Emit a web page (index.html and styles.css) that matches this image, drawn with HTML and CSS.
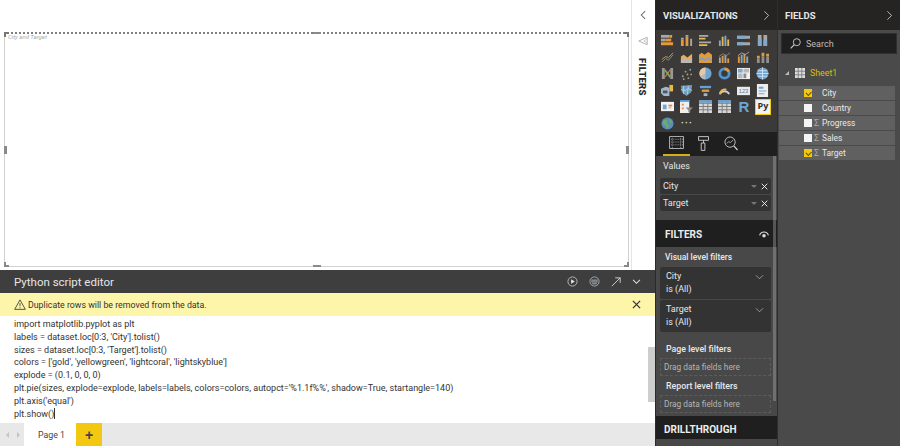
FILE: index.html
```
<!DOCTYPE html>
<html lang="en">
<head>
<meta charset="utf-8">
<title>Python script editor</title>
<link rel="stylesheet" href="styles.css">
</head>
<body>
<svg class="defs" width="0" height="0" aria-hidden="true">
  <defs>
    <symbol id="chev-r" viewBox="0 0 10 14"><path d="M2 1l6 6-6 6" fill="none" stroke="currentColor" stroke-width="1.3"/></symbol>
    <symbol id="chev-d" viewBox="0 0 14 10"><path d="M1 2l6 6 6-6" fill="none" stroke="currentColor" stroke-width="1.2"/></symbol>
    <symbol id="x" viewBox="0 0 10 10"><path d="M1 1l8 8M9 1l-8 8" fill="none" stroke="currentColor" stroke-width="1.4"/></symbol>
    <symbol id="grid" viewBox="0 0 14 14"><rect width="14" height="14" fill="#d6d6d6"/><path d="M0 3.5h14M0 7h14M0 10.500h14M4.500 3v11M9.500 3v11" stroke="#777" stroke-width="1"/><rect width="14" height="3" fill="#6f9fc8"/></symbol>
  </defs>
</svg>
<div class="app">
  <div class="main">
    <div class="report">
      <div class="canvas">
        <div class="visual">
          <span class="visual-title">City and Target</span>
          <i class="corner corner-tl"></i>
          <i class="corner corner-tr"></i>
          <i class="corner corner-br"></i>
          <i class="corner corner-bl"></i>
          <i class="tick tick-top"></i>
          <i class="tick tick-bottom"></i>
          <i class="tick-v tick-left"></i>
          <i class="tick-v tick-right"></i>
        </div>
      </div>
      <div class="filter-strip">
        <svg class="strip-chev" width="6" height="10" viewBox="0 0 7 11"><path d="M6 1L1.500 5.500 6 10" fill="none" stroke="#6a6a6a" stroke-width="1.200"/></svg>
        <svg class="strip-funnel" width="10" height="10" viewBox="0 0 12 12"><path d="M11 1.500v9L1 6z" fill="none" stroke="#a5a5a5"/><path d="M11 3.500L7 6l4 2.500" fill="none" stroke="#c0c0c0"/></svg>
        <span class="strip-label">FILTERS</span>
      </div>
    </div>
    <div class="editor-head">
      <span class="editor-title">Python script editor</span>
      <div class="editor-actions">
        <svg width="11" height="11" viewBox="0 0 12 12"><circle cx="6" cy="6" r="5" fill="none" stroke="#b9c0c6"/><path d="M4.500 3.500v5L8.500 6z" fill="#e8e8e8"/></svg>
        <svg width="11" height="11" viewBox="0 0 12 12"><circle cx="6" cy="6" r="5" fill="none" stroke="#a9b0b6"/><path d="M2.500 4.500h7M2.500 6.500h7M3.500 8.500h5" stroke="#b4bbc1" fill="none"/></svg>
        <svg width="10" height="10" viewBox="0 0 12 12"><path d="M1 11L11 1M5 1h6v6" fill="none" stroke="#d4d4d4" stroke-width="1.100"/></svg>
        <svg width="9" height="6" viewBox="0 0 10 7"><path d="M1 1l4 4 4-4" fill="none" stroke="#e0e0e0" stroke-width="1.200"/></svg>
      </div>
    </div>
    <div class="warning">
      <svg width="12" height="11" viewBox="0 0 13 12"><path d="M6.500 1L12.300 11.300H.7z" fill="none" stroke="#444" stroke-width="1"/><path d="M6.500 4.500v3.500M6.500 9v1" stroke="#444"/></svg>
      <span class="warning-text">Duplicate rows will be removed from the data.</span>
      <svg class="warning-close" width="9" height="9" viewBox="0 0 10 10"><use href="#x"/></svg>
    </div>
    <div class="code-wrap">
      <pre class="code">import matplotlib.pyplot as plt
labels = dataset.loc[0:3, 'City'].tolist()
sizes = dataset.loc[0:3, 'Target'].tolist()
colors = ['gold', 'yellowgreen', 'lightcoral', 'lightskyblue']
explode = (0.1, 0, 0, 0)
plt.pie(sizes, explode=explode, labels=labels, colors=colors, autopct='%1.1f%%', shadow=True, startangle=140)
plt.axis('equal')
plt.show()<span class="caret"></span></pre>
      <div class="code-scroll"><div class="code-thumb"></div></div>
    </div>
    <div class="tabs">
      <div class="tab-nav"><span class="tri tri-l"></span><span class="tri tri-r"></span></div>
      <div class="tab">Page 1</div>
      <div class="tab-add">+</div>
    </div>
  </div>

  <div class="viz">
    <div class="panel-head">
      <span>VISUALIZATIONS</span>
      <svg class="head-chev" width="7" height="11"><use href="#chev-r"/></svg>
    </div>
    <div class="viz-grid">
      <svg viewBox="0 0 14 14"><path d="M0 1h9v3H0z" fill="#a8a8a8"/><path d="M9 1h3v3H9zM0 9h13v3H0z" fill="#e39a3c"/><path d="M0 5h5v3H0z" fill="#a8a8a8"/><path d="M5 5h6v3H5z" fill="#e39a3c"/></svg>
      <svg viewBox="0 0 14 14"><path d="M1 6h3v7H1zM6 3h3v10H6z" fill="#e39a3c"/><path d="M1 4h3v2H1zM6 1h3v2H6zM11 5h2v8h-2z" fill="#a8a8a8"/></svg>
      <svg viewBox="0 0 14 14"><path d="M0 1h10v2H0zM0 8h13v2H0z" fill="#a8a8a8"/><path d="M0 4h7v2H0zM0 11h9v2H0z" fill="#e8b84a"/></svg>
      <svg viewBox="0 0 14 14"><path d="M1 7h2v6H1zM7 2h2v11H7z" fill="#7fa9cc"/><path d="M4 3h2v10H4zM10 6h2v7h-2z" fill="#e8b84a"/></svg>
      <svg viewBox="0 0 14 14"><path d="M0 2h14v3H0zM0 9h14v3H0z" fill="#a8a8a8"/><path d="M0 2h9v3H0zM0 9h7v3H0z" fill="#7fa9cc"/></svg>
      <svg viewBox="0 0 14 14"><path d="M2 1h4v12H2zM8 1h4v12H8z" fill="#a8a8a8"/><path d="M2 5h4v8H2zM8 7h4v6H8z" fill="#7fa9cc"/></svg>

      <svg viewBox="0 0 14 14"><path d="M1 12L5 8l3 2 5-6" fill="none" stroke="#8e8e8e"/><path d="M1 9l4-3 3 1 5-5" fill="none" stroke="#d9963c"/></svg>
      <svg viewBox="0 0 14 14"><path d="M1 13V6l3-2 4 3 5-4v10z" fill="#eaa95f"/><path d="M1 13V9l4-1 4 2 4-2v5z" fill="#b8b8b8"/></svg>
      <svg viewBox="0 0 14 14"><path d="M0 13V4l3-2 3 2 4-3 4 3v9z" fill="#e39a3c"/><path d="M0 9l3-2 4 2 3-2 4 2v2l-4-2-3 2-4-2-3 2z" fill="#6fa5d3"/></svg>
      <svg viewBox="0 0 14 14"><path d="M1 7h2v6H1zM7 4h2v9H7z" fill="#a8a8a8"/><path d="M4 5h2v8H4zM10 8h2v5h-2z" fill="#e39a3c"/><path d="M1 6l4-3 4 2 4-3" fill="none" stroke="#888"/></svg>
      <svg viewBox="0 0 14 14"><path d="M1 6h2v7H1zM7 3h2v10H7z" fill="#e39a3c"/><path d="M4 4h2v9H4zM10 6h2v7h-2z" fill="#7fa9cc"/><path d="M1 5l4-3 4 2 4-3" fill="none" stroke="#aaa"/></svg>
      <svg viewBox="0 0 14 14"><path d="M1 5h3v3H1zM6 2h3v4H6zM11 3h3v3h-3z" fill="#e39a3c"/><path d="M1 8h3v5H1zM6 6h3v7H6zM11 6h3v7h-3z" fill="#8f8f8f"/></svg>

      <svg viewBox="0 0 14 14"><path d="M1 1h3v12H1zM10 1h3v12h-3z" fill="#999"/><path d="M4 3l6 8" stroke="#79a86a" stroke-width="2"/><path d="M4 11l6-8" stroke="#d9873a" stroke-width="1.200"/></svg>
      <svg viewBox="0 0 14 14"><g fill="#7fa9cc"><circle cx="3" cy="10" r="1"/><circle cx="6" cy="5" r="1"/><circle cx="11" cy="3" r="1"/></g><g fill="#e39a3c"><circle cx="8" cy="8" r="1"/><circle cx="4" cy="13" r="1"/></g><g fill="#9a9a9a"><circle cx="12" cy="8" r="1"/><circle cx="9" cy="12" r="1"/></g></svg>
      <svg viewBox="0 0 14 14"><circle cx="7" cy="7" r="6.500" fill="#6fa5d3"/><path d="M7 7V.5A6.500 6.500 0 0 0 1.500 10.500z" fill="#e8c8a8"/><path d="M7 7l-5.500 3.500A6.500 6.500 0 0 0 7 13.500z" fill="#b9b9b9"/></svg>
      <svg viewBox="0 0 14 14"><circle cx="7" cy="7" r="5" fill="none" stroke="#4f94cf" stroke-width="3"/><path d="M7 2a5 5 0 0 1 4.500 3" fill="none" stroke="#e39a3c" stroke-width="3"/></svg>
      <svg viewBox="0 0 14 14"><path d="M0 1h14v12H0z" fill="#f0f0f0"/><path d="M1 2h5v4H1z" fill="#7fa9cc"/><path d="M7 2h6v4H7zM1 7h5v5H1z" fill="#b8b8b8"/><path d="M7 7h3v5H7z" fill="#8a8a8a"/></svg>
      <svg viewBox="0 0 14 14"><circle cx="7" cy="7" r="6.500" fill="#6fa5d3"/><path d="M.5 7h13M2 4h10M2 10h10M7 .5v13" stroke="#e4eef6" stroke-width=".8" fill="none"/></svg>

      <svg viewBox="0 0 14 14"><path d="M0 5l5-2 4 1v9H3L0 10z" fill="#9db9cf"/><path d="M9 1h4v7H9z" fill="#e8b84a"/><path d="M2 7h5v3H2z" fill="#555"/></svg>
      <svg viewBox="0 0 14 14"><path d="M1 2l12-1-1 8-5 4-5-4z" fill="#6e9cc0"/><path d="M1 6l5 1 3-2 4 2M4 2v9M9 2l-1 9" stroke="#cfdbe6" stroke-width=".8" fill="none"/></svg>
      <svg viewBox="0 0 14 14"><path d="M1 2h12v2.500H1z" fill="#5fa2d8"/><path d="M3 6h8v2.500H3z" fill="#e39a3c"/><path d="M5 10h4v3H5z" fill="#9bb9d0"/></svg>
      <svg viewBox="0 0 14 14"><path d="M2 11a5.500 5.500 0 0 1 10 0" fill="none" stroke="#cfcfcf" stroke-width="2"/><path d="M2 11a5.500 5.500 0 0 1 7-5" fill="none" stroke="#e8b84a" stroke-width="2"/></svg>
      <svg viewBox="0 0 14 14"><path d="M0 3h14v9H0z" fill="#e9e9e9"/><text x="7" y="10" font-size="6" text-anchor="middle" font-family="Liberation Sans" fill="#4f7ea8">123</text></svg>
      <svg viewBox="0 0 14 14"><path d="M1 0h12v14H1z" fill="#eeeeee"/><path d="M3 3h5v2H3zM3 7h8v1H3zM3 10h6v1H3z" fill="#6fa5d3"/></svg>

      <svg viewBox="0 0 14 14"><path d="M0 2h14v10H0z" fill="#f3f3f3"/><path d="M2 5h4v5H2z" fill="#6fa5d3"/><path d="M8 5h4v2H8z" fill="#e08a4a"/><path d="M8 8h3v1H8z" fill="#999"/></svg>
      <svg viewBox="0 0 14 14"><path d="M0 0h10v14H0z" fill="#eeeeee"/><path d="M0 0h10v2H0z" fill="#5b9bd5"/><path d="M2 4h2v2H2zM2 8h2v2H2z" fill="#e08a4a"/><path d="M6 8h8l-3 3v3l-2-1v-2z" fill="#8d8d8d"/></svg>
      <svg viewBox="0 0 14 14"><use href="#grid"/></svg>
      <svg viewBox="0 0 14 14"><use href="#grid"/></svg>
      <span class="viz-r">R</span>
      <span class="viz-py">Py</span>

      <svg viewBox="0 0 14 14"><circle cx="7" cy="7" r="6.500" fill="#5a8fb8"/><path d="M3 3l4 1-1 3 3 2-2 4-2-4-3-2z" fill="#6fae6a"/><path d="M9 2l3 3-2 2z" fill="#6fae6a"/></svg>
      <span class="viz-more">···</span>
    </div>
    <div class="viz-tabs">
      <span class="viz-tab viz-tab-on">
        <svg width="15" height="13" viewBox="0 0 16 14"><path d="M.5.5h15v13H.5z" fill="none" stroke="#bdbdbd"/><path d="M0 3.500h16M0 6.500h16M0 9.500h16M3.500 0v14M12.500 0v14" stroke="#9c9c9c" stroke-dasharray="1 1"/></svg>
      </span>
      <span class="viz-tab">
        <svg width="11" height="15" viewBox="0 0 12 16"><path d="M.5.5h11v4H.5zM6 4.500v3H3.500v8h4v-8H6" fill="none" stroke="#d0d0d0"/></svg>
      </span>
      <span class="viz-tab">
        <svg width="14" height="15" viewBox="0 0 15 16"><circle cx="6.500" cy="6.500" r="5.500" fill="none" stroke="#c4c4c4"/><path d="M10.500 10.500l4 4.500" stroke="#d0d0d0" stroke-width="1.400"/><path d="M3 8l2-2 2 1 3-3" fill="none" stroke="#a9a9a9"/></svg>
      </span>
    </div>
    <div class="values">
      <div class="values-label">Values</div>
      <div class="well">
        <div class="pill"><span>City</span><i class="pill-caret"></i><svg width="7" height="7"><use href="#x"/></svg></div>
        <div class="pill"><span>Target</span><i class="pill-caret"></i><svg width="7" height="7"><use href="#x"/></svg></div>
      </div>
    </div>
    <div class="filters-head">
      <span>FILTERS</span>
      <svg width="10" height="7" viewBox="0 0 11 8"><path d="M.5 5a5.200 5.200 0 0 1 10 0" fill="none" stroke="#ddd" stroke-width="1.200"/><circle cx="5.500" cy="5.500" r="2" fill="#ddd"/></svg>
    </div>
    <div class="filters">
      <div class="filter-label filter-label-first">Visual level filters</div>
      <div class="filter-well">
        <div class="filter-card">
          <div class="filter-name"><span>City</span><svg width="9" height="6"><use href="#chev-d"/></svg></div>
          <div>is (All)</div>
        </div>
        <div class="filter-card">
          <div class="filter-name"><span>Target</span><svg width="9" height="6"><use href="#chev-d"/></svg></div>
          <div>is (All)</div>
        </div>
      </div>
      <div class="filter-label filter-label-page">Page level filters</div>
      <div class="drop">Drag data fields here</div>
      <div class="filter-label filter-label-report">Report level filters</div>
      <div class="drop">Drag data fields here</div>
    </div>
    <div class="drill-head">DRILLTHROUGH</div>
    <div class="drill-body"></div>
    <div class="panel-scroll"></div>
  </div>

  <div class="fields">
    <div class="panel-head">
      <span>FIELDS</span>
      <svg class="head-chev" width="7" height="11"><use href="#chev-r"/></svg>
    </div>
    <div class="search">
      <svg width="11" height="11" viewBox="0 0 11 11"><circle cx="6.800" cy="4.200" r="3.500" fill="none" stroke="#bdbdbd"/><path d="M4.300 6.700L.7 10.300" stroke="#c8c8c8" stroke-width="1.200"/></svg>
      <span>Search</span>
    </div>
    <div class="table-row">
      <i class="expand"></i>
      <svg width="10" height="10" viewBox="0 0 14 14"><rect width="14" height="14" fill="#dcdcdc"/><path d="M0 4.500h14M0 9.500h14M4.500 0v14M9.500 0v14" stroke="#777" stroke-width="1.200"/></svg>
      <span class="table-name">Sheet1</span>
    </div>
    <div class="field-list">
      <div class="field"><i class="check check-on"></i><span class="sigma"></span><span>City</span></div>
      <div class="field"><i class="check"></i><span class="sigma"></span><span>Country</span></div>
      <div class="field"><i class="check"></i><span class="sigma">Σ</span><span>Progress</span></div>
      <div class="field"><i class="check"></i><span class="sigma">Σ</span><span>Sales</span></div>
      <div class="field"><i class="check check-on"></i><span class="sigma">Σ</span><span>Target</span></div>
    </div>
  </div>
</div>
</body>
</html>
```
FILE: styles.css
```
* { box-sizing: border-box; }
html, body { margin: 0; height: 100%; }
body { width: 900px; height: 446px; overflow: hidden; background: #fff; font-family: Roboto, "Open Sans", sans-serif; font-size: 9px; color: #ddd; }
.defs { position: absolute; }
.app { display: flex; width: 900px; height: 446px; }

/* main column */
.main { width: 655px; display: flex; flex-direction: column; background: #fff; }
.report { height: 270px; display: flex; }
.canvas { width: 632px; padding: 32px 2px 3px 4px; border-right: 1px solid #e4e4e4; }
.visual { position: relative; height: 100%; border: 1px solid #d2d2d2; border-top: 2px dotted #7f7f7f; }
.visual-title { position: absolute; left: 3px; top: -2px; font-size: 6px; color: #a9a9a9; font-style: italic; line-height: 9px; }
.corner { position: absolute; width: 5px; height: 5px; }
.corner-tl { left: -1px; top: -2px; border-left: 2px solid #777; border-top: 2px solid #777; }
.corner-tr { right: -1px; top: -2px; border-right: 2px solid #777; border-top: 2px solid #777; }
.corner-br { right: -1px; bottom: -1px; border-right: 2px solid #888; border-bottom: 2px solid #888; }
.corner-bl { left: -1px; bottom: -1px; border-left: 2px solid #888; border-bottom: 2px solid #888; }
.tick { position: absolute; left: 50%; width: 8px; height: 2px; margin-left: -4px; background: #8a8a8a; }
.tick-top { top: -2px; }
.tick-bottom { bottom: -1px; }
.tick-v { position: absolute; top: 50%; width: 3px; height: 8px; margin-top: -4px; background: #8a8a8a; }
.tick-left { left: -1px; }
.tick-right { right: -1px; }

.filter-strip { width: 23px; display: flex; flex-direction: column; align-items: center; padding-top: 10px; gap: 10px; }
.strip-chev { margin-right: 2px; }
.strip-funnel { margin-top: 6px; margin-right: 2px; }
.strip-label { writing-mode: vertical-rl; font-family: Roboto, sans-serif; font-weight: 900; font-size: 9.500px; letter-spacing: .3px; color: #2b2b2b; margin-top: 2px; margin-right: 2px; }

.editor-head { height: 23px; background: #3e3e3e; display: flex; align-items: center; justify-content: space-between; padding: 0 14px; }
.editor-title { color: #e6e6e6; font-size: 11.500px; }
.editor-actions { display: flex; align-items: center; gap: 11px; }
.warning { height: 23px; background: #fdf5aa; display: flex; align-items: center; gap: 2px; padding: 0 14px; color: #333; font-size: 8.800px; }
.warning-text { flex: 1; }
.warning-close { color: #333; }
.code-wrap { flex: 1; display: flex; min-height: 0; }
.code { flex: 1; margin: 0; padding: 2px 0 0 14px; font-family: Roboto, "Open Sans", sans-serif; font-size: 9px; line-height: 12.800px; color: #333; white-space: pre; overflow: hidden; }
.caret { display: inline-block; width: 1px; height: 11px; background: #333; vertical-align: -2px; }
.code-scroll { width: 7px; padding-top: 31px; }
.code-thumb { height: 55px; background: #cdcdcd; }
.tabs { height: 23px; background: #e8e8e8; display: flex; }
.tab-nav { width: 24px; display: flex; align-items: center; justify-content: center; gap: 8px; padding-left: 2px; }
.tri { width: 0; height: 0; border-top: 3px solid transparent; border-bottom: 3px solid transparent; }
.tri-l { border-right: 3px solid #c4c4c4; }
.tri-r { border-left: 3px solid #c4c4c4; }
.tab { width: 52px; background: #fff; color: #444; display: flex; align-items: center; justify-content: center; font-size: 8.800px; padding-left: 3px; }
.tab-add { width: 26px; background: #f2c811; color: #444; display: flex; align-items: center; justify-content: center; font-size: 14px; font-weight: 700; font-family: "Liberation Sans", sans-serif; }

/* panels */
.viz, .fields { width: 123px; display: flex; flex-direction: column; background: #484848; border-left: 1px solid #2a2a2a; }
.viz { position: relative; border-right: 1px solid #2e2e2e; }
.fields { width: 122px; border-left: 0; background: #4a4a4a; }
.panel-head { height: 30px; background: #252423; display: flex; align-items: center; justify-content: space-between; padding: 0 7px; color: #e8e8e8; font-family: Roboto, sans-serif; font-size: 9.500px; font-weight: 700; }
.viz-grid { height: 102px; background: #3b3a39; padding: 4px 4px 0 5px; display: grid; grid-template-columns: repeat(6, 14px); grid-auto-rows: 14px; column-gap: 5px; row-gap: 2.500px; align-content: start; }
.head-chev { color: #c8c8c8; }
.viz-grid svg { width: 13px; height: 13px; display: block; }
.viz-r { color: #6fa5d3; font: 700 15px/14px "Liberation Sans", sans-serif; text-align: center; }
.viz-py { border: 1px solid #f2c811; background: #f2f2f2; color: #333; font: 700 9px/12px "Open Sans", sans-serif; text-align: center; width: 16px; margin-left: -1px; height: 16px; margin-top: -1px; }
.viz-more { color: #ddd; font: 700 9px/12px "Liberation Sans", sans-serif; letter-spacing: 1px; text-align: center; }
.viz-tabs { height: 24px; background: #1f1f1f; display: flex; padding-left: 7px; align-items: flex-start; }
.viz-tab { width: 27px; height: 24px; display: flex; justify-content: center; align-items: flex-start; padding-top: 4px; }
.viz-tab-on { border-bottom: 2px solid #d4ae12; }

.values { height: 64px; padding: 4px 6px 0 4px; }
.values-label { color: #e4e4e4; font-size: 9px; line-height: 13px; margin-bottom: 5px; padding-left: 3px; }
.well { display: flex; flex-direction: column; gap: 1px; }
.pill { height: 16px; background: #333; border-radius: 2px; display: flex; align-items: center; padding: 0 3px; color: #e4e4e4; font-size: 9px; }
.pill span { flex: 1; }
.pill svg { color: #e8e8e8; margin-left: 4px; }
.pill-caret { width: 0; height: 0; border-left: 3px solid transparent; border-right: 3px solid transparent; border-top: 3px solid #777; }

.filters-head { height: 27px; background: #1f1f1f; display: flex; align-items: center; justify-content: space-between; padding: 1px 8px 0 9px; color: #eee; font-family: Roboto, sans-serif; font-size: 10px; font-weight: 700; }
.filters { height: 169px; padding: 4px 6px 0 4px; }
.filter-label { color: #e8e8e8; font-size: 8.800px; line-height: 12px; padding-left: 6px; font-weight: 500; }
.filter-label-first { margin-bottom: 4px; padding-left: 5px; font-size: 8.500px; }
.filter-label-report { margin-bottom: 3px; }
.filter-well { display: flex; flex-direction: column; gap: 1px; height: 65px; margin-bottom: 11px; }
.filter-card { height: 32px; background: #333; border-radius: 2px; padding: 3px 6px 0; color: #e8e8e8; font-size: 9px; line-height: 13px; }
.filter-name { display: flex; justify-content: space-between; align-items: center; }
.filter-name svg { color: #bbb; margin-right: 1px; }
.drop { height: 18px; margin-top: 3px; margin-bottom: 4px; border: 1px dashed #5c5c5c; color: #b5b5b5; font-size: 8.300px; line-height: 16px; padding-left: 3px; }
.filter-label-report + .drop { margin-top: 0; }
.drill-head { height: 23px; background: #1f1f1f; color: #eee; font-family: Roboto, sans-serif; font-size: 10px; font-weight: 700; padding: 7px 0 0 8px; line-height: 14px; }
.drill-body { flex: 1; }
.panel-scroll { position: absolute; right: 1px; top: 156px; width: 3px; height: 245px; background: rgba(190, 190, 190, .35); }

.search { margin: 3px 3px 0 3px; height: 21px; background: #1f1f1f; border: 1px solid #2f2f2f; display: flex; align-items: center; gap: 5px; padding-left: 8px; color: #bdbdbd; font-size: 9px; }
.table-row { display: flex; align-items: center; height: 14px; margin-top: 12px; padding-left: 7px; gap: 6px; }
.expand { width: 0; height: 0; border-bottom: 4px solid #bbb; border-left: 4px solid transparent; }
.table-name { color: #e0b90f; font-size: 8.800px; margin-left: -1px; }
.field-list { margin-top: 6px; padding: 0 5px 0 1px; display: flex; flex-direction: column; gap: 1px; }
.field { height: 14px; background: #606060; display: flex; align-items: center; color: #e8e8e8; font-size: 8.400px; padding-left: 25px; }
.check { width: 8px; height: 8px; background: #f4f4f4; flex: none; }
.check-on { background: #f2c811; position: relative; }
.check-on::after { content: ""; position: absolute; left: 2px; top: 1.500px; width: 4px; height: 2.500px; border-left: 1px solid #5a4a00; border-bottom: 1px solid #5a4a00; transform: rotate(-45deg); }
.sigma { width: 7px; margin-left: 2px; margin-right: 1px; color: #a8a8a8; font-size: 9px; flex: none; }
```
